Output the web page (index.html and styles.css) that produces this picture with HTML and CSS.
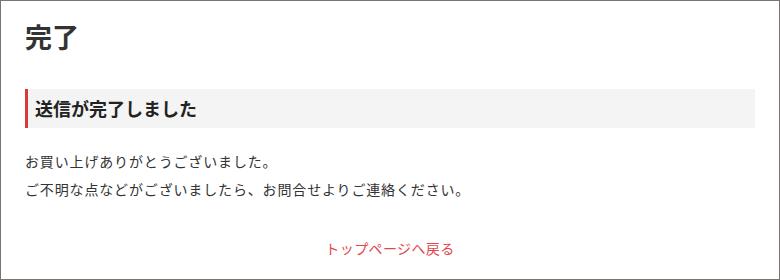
FILE: index.html
```html
<!DOCTYPE html>
<html lang="ja">
<head>
<meta charset="utf-8">
<title>完了</title>
<link rel="stylesheet" href="styles.css">
</head>
<body>
<div class="page">
  <h1 class="title">完了</h1>
  <h2 class="notice">送信が完了しました</h2>
  <p class="message">お買い上げありがとうございました。<br>ご不明な点などがございましたら、お問合せよりご連絡ください。</p>
  <div class="back"><a class="back-link" href="#">トップページへ戻る</a></div>
</div>
</body>
</html>
```
FILE: styles.css
```css
html, body {
  margin: 0;
  padding: 0;
  background: #fff;
}
body {
  font-family: "Noto Sans CJK JP", "Noto Sans", sans-serif;
  color: #333;
}
.page {
  box-sizing: border-box;
  width: 780px;
  height: 280px;
  border: 1px solid #7a7572;
  padding: 0 24px;
  overflow: hidden;
}
.title {
  margin: 16px 0 0;
  font-size: 27px;
  line-height: 40px;
  font-weight: bold;
  color: #333;
}
.notice {
  margin: 32px 0 0;
  padding: 6px 8px 6px 7px;
  border-left: 3px solid #d43b3b;
  background: #f4f4f4;
  font-size: 18px;
  line-height: 27px;
  font-weight: bold;
  color: #222;
}
.message {
  margin: 19px 0 0;
  font-size: 14px;
  line-height: 28px;
  letter-spacing: 0.85px;
  color: #333;
}
.back {
  margin-top: 31px;
  text-align: center;
  font-size: 14px;
  line-height: 28px;
  letter-spacing: 0.4px;
}
.back-link {
  color: #e0474c;
  text-decoration: none;
}
```
